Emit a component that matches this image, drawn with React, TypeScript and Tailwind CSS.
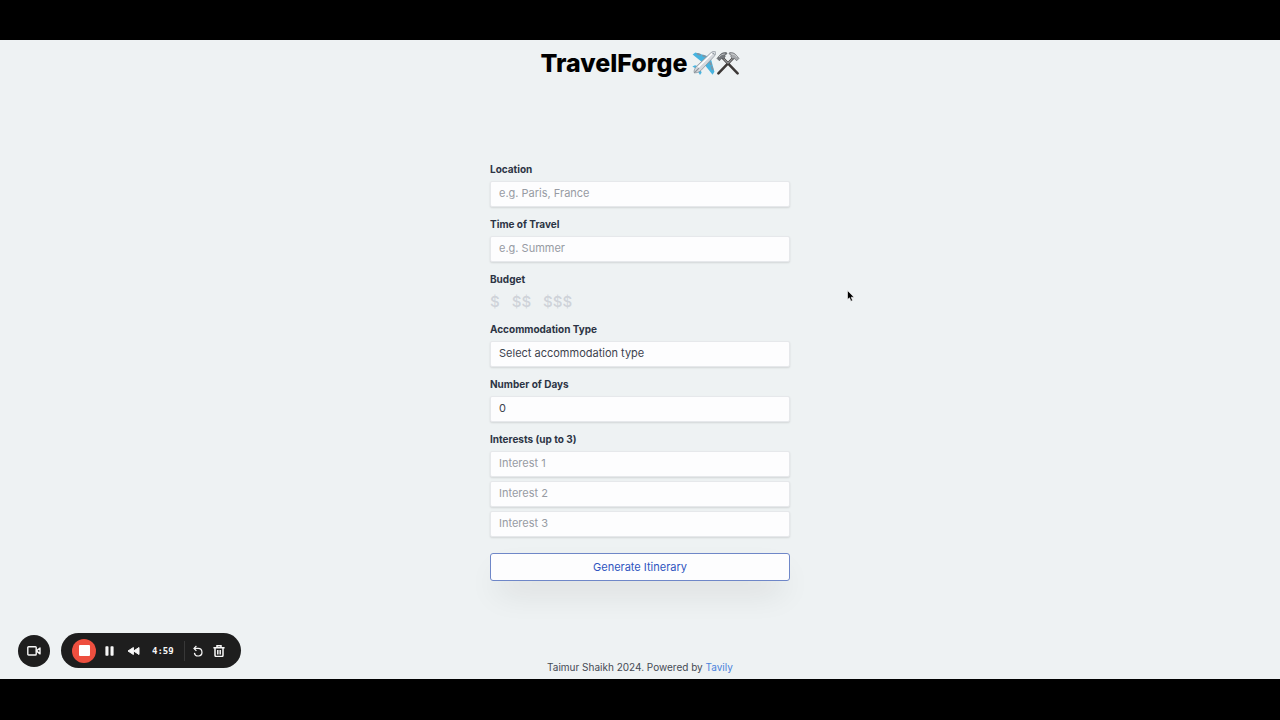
import { useState } from 'react'
import type { InputHTMLAttributes, ReactNode } from 'react'

const budgets = ['$', '$$', '$$$']
const accommodationTypes = ['Hotel', 'Hostel', 'Apartment', 'Resort']

const fieldClass =
  'block h-[26px] w-full appearance-none rounded-[2px] border border-[#e6e8eb] bg-[#fdfdfe] px-2 pb-[2px] text-[11px] leading-4 text-[#3d434e] shadow-[0_1px_2px_rgba(0,0,0,0.12)] outline-none placeholder:text-[#979ba3] placeholder:opacity-100'

const labelClass = 'mb-[3px] block h-[18px] text-[10px] leading-[18px] font-bold text-[#2c3444]'

function Field({ id, label, children }: { id: string; label: string; children: ReactNode }) {
  return (
    <div>
      <label htmlFor={id} className={labelClass}>{label}</label>
      {children}
    </div>
  )
}

function TextInput(props: InputHTMLAttributes<HTMLInputElement>) {
  return <input type="text" className={fieldClass} {...props} />
}

function Plane() {
  return (
    <svg viewBox="0 0 24 24" className="h-6 w-6" aria-hidden="true">
      <path d="M.6 3.6 3.400 1.600l13.200 3.800-4.800 7z" fill="#48b4e0" />
      <path d="M22.400 20.800 20.600 23.800 11.800 12.800 18.800 7.600z" fill="#48b4e0" />
      <path d="M.4 15.400 3 14.200l7 2.400-3 3z" fill="#48b4e0" />
      <path d="M8 24 9.600 21.800l-2-6L4.400 18z" fill="#48b4e0" />
      <path d="M5.600 2.800 8 3.600M11 4.600l2 .8M20.600 18.400l-.8-2.400M19 13.600l-.7-1.800" stroke="#8295a3" strokeWidth="1.800" strokeLinecap="round" />
      <path d="M23.400.7c.8.8.2 3-1.400 4.800L8.800 19.600C6.800 21.400 3.400 22.400 2.400 21.400S2.800 17.200 4.600 15.200L18.600 2C20.400.4 22.600-.1 23.400.7z" fill="#d5d9de" stroke="#8d949c" strokeWidth=".8" />
      <path d="M20.400 2.200 6.200 16.200" stroke="#fff" strokeWidth="1.500" />
      <path d="m20.800 2.200 1.200 1.200" stroke="#4d5964" strokeWidth="1" />
      <path d="m7 17.200-5 5" stroke="#8d949c" strokeWidth="1.200" />
    </svg>
  )
}

function Hammers() {
  return (
    <svg viewBox="0 0 24 24" className="h-6 w-6" fill="none" aria-hidden="true">
      <path d="M6.200 6.400 21.600 22.400" stroke="#3c3836" strokeWidth="2.500" strokeLinecap="round" />
      <path d="M17.800 6.400 2.400 22.400" stroke="#3c3836" strokeWidth="2.500" strokeLinecap="round" />
      <path d="m7 7.200 5 5.200M17 7.200l-5 5.200" stroke="#96999c" strokeWidth="1.200" />
      <path d="m1 7.400 2.400 2.400 2-2.200 1.800.2 2-2-.4-1.800 2.200-1.200-.6-1.200c-3-.4-5.400.8-7 3z" fill="#73777b" stroke="#4e5255" strokeWidth=".6" />
      <path d="m23 7.400-2.400 2.400-2-2.200-1.800.2-2-2 .4-1.800L13 2.800l.6-1.200c3-.4 5.400.8 7 3z" fill="#a6a9ac" stroke="#5c6063" strokeWidth=".6" />
      <path d="M3 6c1.400-1.800 3.400-2.900 5.800-3M21 6c-1.400-1.800-3.400-2.900-5.800-3" stroke="#dadcde" strokeWidth=".7" />
    </svg>
  )
}

function RecorderBar() {
  return (
    <div className="absolute bottom-[11px] left-[18px] flex items-center gap-[11px] text-[#f7f7f7]">
      <button type="button" aria-label="Camera" className="flex h-8 w-8 items-center justify-center rounded-full bg-[#1e1e1e]">
        <svg viewBox="0 0 14 10" className="h-[10px] w-[14px]" fill="none" stroke="currentColor" strokeWidth="1.4">
          <rect x=".8" y=".8" width="8.400" height="8.200" rx=".8" />
          <path d="m9.400 4.900 3.600-2.900v5.900z" strokeLinejoin="round" />
        </svg>
      </button>

      <div className="flex h-[35px] w-[180px] items-center rounded-full bg-[#1e1e1e] pl-[11px]">
        <button type="button" aria-label="Stop" className="flex h-6 w-6 items-center justify-center rounded-full bg-[#ee4f3f]">
          <span className="h-[11px] w-[11px] rounded-[1px] bg-white" />
        </button>
        <button type="button" aria-label="Pause" className="ml-[9px]">
          <svg viewBox="0 0 10 10" className="h-[10px] w-[10px]" fill="currentColor">
            <rect x=".4" y=".2" width="3.100" height="9.600" rx=".8" />
            <rect x="5.500" y=".2" width="3.100" height="9.600" rx=".8" />
          </svg>
        </button>
        <button type="button" aria-label="Rewind" className="ml-3">
          <svg viewBox="0 0 13 10" className="h-[10px] w-[13px]" fill="currentColor" stroke="currentColor" strokeLinejoin="round">
            <path d="M6.400 1.500v7L1 5zM12 1.500v7L6.600 5z" />
          </svg>
        </button>
        <span className="ml-3 w-6 font-['DejaVu_Sans_Mono',monospace] text-[9px] leading-3 font-bold">4:59</span>
        <span className="ml-2 h-5 w-px bg-[#383838]" />
        <button type="button" aria-label="Restart" className="ml-[7px]">
          <svg viewBox="0 0 12 12" className="h-3 w-3" fill="none" stroke="currentColor" strokeWidth="1.200">
            <path d="M2.400 3.400h3.700a3.800 3.800 0 1 1-3.700 4.400" />
            <path d="M4.400 1 2 3.400l2.400 2.400" />
          </svg>
        </button>
        <button type="button" aria-label="Delete" className="ml-[9px]">
          <svg viewBox="0 0 12 12" className="h-3 w-3" fill="none" stroke="currentColor" strokeWidth="1.500">
            <path d="M.4 2.800h11.200M4 2.600V.8h4v1.800M2 3v7.200c0 .8.400 1.200 1.200 1.200h5.600c.8 0 1.200-.4 1.200-1.200V3M4.800 5v4.400M7.200 5v4.400" />
          </svg>
        </button>
      </div>
    </div>
  )
}

export default function App() {
  const [budget, setBudget] = useState('')
  const [days, setDays] = useState(0)

  return (
    <div className="flex min-h-screen flex-col bg-black pt-10 pb-[41px] font-[Inter,sans-serif]">
      <div className="relative flex flex-1 flex-col items-center bg-[#eef2f3]">
        <header className="flex h-[46px] items-center gap-1">
          <h1 className="text-[25px] leading-8 font-extrabold text-black">TravelForge</h1>
          <span className="flex">
            <Plane />
            <Hammers />
          </span>
        </header>

        <main className="flex w-full flex-1 items-center justify-center">
          <form className="w-[300px]" onSubmit={e => e.preventDefault()}>
            <div className="flex flex-col gap-2">
              <Field id="location" label="Location">
                <TextInput id="location" placeholder="e.g. Paris, France" />
              </Field>
              <Field id="time" label="Time of Travel">
                <TextInput id="time" placeholder="e.g. Summer" />
              </Field>

              <div role="group" aria-labelledby="budget-label">
                <span id="budget-label" className={labelClass}>Budget</span>
                <div className="flex gap-3">
                  {budgets.map(b => (
                    <button
                      key={b}
                      type="button"
                      onClick={() => setBudget(b)}
                      className={`h-[21px] text-[15px] leading-5 font-medium ${budget === b ? 'text-blue-700' : 'text-[#cfd3d9]'}`}
                    >
                      {b}
                    </button>
                  ))}
                </div>
              </div>

              <Field id="accommodation" label="Accommodation Type">
                <select id="accommodation" className={fieldClass} defaultValue="">
                  <option value="">Select accommodation type</option>
                  {accommodationTypes.map(t => (
                    <option key={t} value={t}>{t}</option>
                  ))}
                </select>
              </Field>
              <Field id="days" label="Number of Days">
                <TextInput id="days" inputMode="numeric" value={days} onChange={e => setDays(Number(e.target.value) || 0)} />
              </Field>
              <Field id="interest-1" label="Interests (up to 3)">
                <div className="flex flex-col gap-1">
                  {[1, 2, 3].map(n => (
                    <TextInput key={n} id={`interest-${n}`} aria-label={`Interest ${n}`} placeholder={`Interest ${n}`} />
                  ))}
                </div>
              </Field>
            </div>

            <button
              type="submit"
              className="mt-4 block h-7 w-full rounded-[3px] border border-[#6f87c8] bg-[#fdfdfe] text-[11px] leading-4 text-[#2f55c0] shadow-[0_16px_32px_-8px_rgba(30,10,20,0.16)]"
            >
              Generate Itinerary
            </button>
          </form>
        </main>

        <footer className="h-6 text-[10px] leading-6 text-[#454a54]">
          Taimur Shaikh 2024. Powered by <a href="#tavily" className="text-[#4b83dc]">Tavily</a>
        </footer>

        <RecorderBar />

        {/* Mouse pointer */}
        <svg viewBox="0 0 8 12" className="pointer-events-none absolute top-[250px] left-[847px] h-3 w-2" aria-hidden="true">
          <path d="M.5.600v9l2-1.800 1.400 3.400 1.700-.7-1.400-3.300h2.900z" fill="#000" stroke="#fff" strokeWidth=".6" />
        </svg>
      </div>
    </div>
  )
}
